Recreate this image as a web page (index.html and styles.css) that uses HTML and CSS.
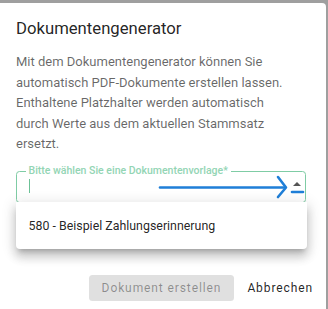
FILE: index.html
```html
<!DOCTYPE html>
<html lang="de">
  <head>
    <meta charset="UTF-8">
    <title>Dokumentengenerator</title>
    <meta name="viewport" content="width=device-width, initial-scale=1">
    <link rel="stylesheet" href="styles.css">
  </head>
  <body>
    <div class="dialog" role="dialog" aria-labelledby="dlg-title">
      <h2 class="dialog-title" id="dlg-title">Dokumentengenerator</h2>
      <div class="dialog-content">
        <p class="dialog-text">
          Mit dem Dokumentengenerator können Sie automatisch PDF-Dokumente erstellen lassen.
          Enthaltene Platzhalter werden automatisch durch Werte aus dem aktuellen Stammsatz ersetzt.
        </p>
        <div class="field">
          <span class="field-label">Bitte wählen Sie eine Dokumentenvorlage*</span>
          <span class="caret"></span>
          <!-- hand-drawn pointer from the screenshot annotation -->
          <svg class="pointer" width="150" height="32" viewBox="0 0 150 32" aria-hidden="true">
            <path d="M2 17.5 L126 17.5" />
            <path d="M120 7 L128 17.5 L120 27" />
            <path d="M134 22 L145 22" />
          </svg>
          <span class="select-arrow"></span>
          <ul class="options" role="listbox">
            <li class="option" role="option">580 - Beispiel Zahlungserinnerung</li>
          </ul>
        </div>
      </div>
      <div class="actions">
        <button class="btn btn-flat" disabled>Dokument erstellen</button>
        <button class="btn btn-text">Abbrechen</button>
      </div>
    </div>
  </body>
</html>
```
FILE: styles.css
```css
html, body {
  margin: 0;
  height: 100%;
  overflow: hidden;
}

body {
  background: #9f9f9f;
  font-family: Roboto, "Liberation Sans", sans-serif;
  padding-top: 3px;
  box-sizing: border-box;
}

.dialog {
  width: 326px;
  height: 100%;
  box-sizing: border-box;
  background: #fff;
  border-radius: 0 4px 0 0;
  padding-bottom: 8px;
}

.dialog-title {
  margin: 0;
  padding: 14px 20px 0 16px;
  font-size: 16.7px;
  line-height: 24px;
  font-weight: 400;
  color: rgba(0, 0, 0, .87);
}

.dialog-content {
  padding: 0 20px 0 16px;
}

.dialog-text {
  margin: 11px 10px 0 0;
  font-size: 13px;
  line-height: 20.6px;
  color: rgba(0, 0, 0, .6);
}

.field {
  position: relative;
  margin-top: 16px;
  height: 32px;
  box-sizing: border-box;
  border: 1.5px solid #7fcca5;
  border-radius: 3.5px;
}

.field-label {
  position: absolute;
  top: -7px;
  left: 8.5px;
  padding: 0 3px;
  background: #fff;
  font-size: 10.5px;
  line-height: 12px;
  font-weight: 500;
  color: #93d5b4;
}

.caret {
  position: absolute;
  left: 12px;
  top: 7.5px;
  width: 1.3px;
  height: 14px;
  background: #6cc196;
}

.pointer {
  position: absolute;
  left: 140.5px;
  top: -1.5px;
  fill: none;
  stroke: #1f7fd8;
  stroke-width: 2.6;
  stroke-linecap: round;
  stroke-linejoin: round;
}

.select-arrow {
  position: absolute;
  left: 275.5px;
  top: 10.5px;
  width: 0;
  height: 0;
  border-left: 4.5px solid transparent;
  border-right: 4.5px solid transparent;
  border-bottom: 4.5px solid #555;
}

.options {
  position: absolute;
  left: -1.5px;
  right: -1.5px;
  top: 100%;
  margin: 0;
  padding: 0;
  list-style: none;
  background: #fff;
  border-radius: 0 0 4px 4px;
  box-shadow: 0 5px 5px -3px rgba(0, 0, 0, .2), 0 8px 10px 1px rgba(0, 0, 0, .14), 0 3px 14px 2px rgba(0, 0, 0, .12);
  z-index: 2;
}

.option {
  padding: 0 13px;
  height: 47px;
  line-height: 47px;
  font-size: 12.4px;
  color: rgba(0, 0, 0, .87);
}

.actions {
  display: flex;
  justify-content: flex-end;
  gap: 6px;
  margin-top: 72px;
  padding: 0 6px;
}

.btn {
  height: 26px;
  border: 0;
  border-radius: 3.5px;
  font-family: inherit;
  font-size: 12px;
  font-weight: 400;
  letter-spacing: .9px;
  background: transparent;
}

.btn-flat {
  padding: 0 13px;
}

.btn-flat:disabled {
  background: #e0e0e0;
  color: rgba(0, 0, 0, .38);
}

.btn-text {
  padding: 0 7px;
  color: rgba(0, 0, 0, .87);
}
```
